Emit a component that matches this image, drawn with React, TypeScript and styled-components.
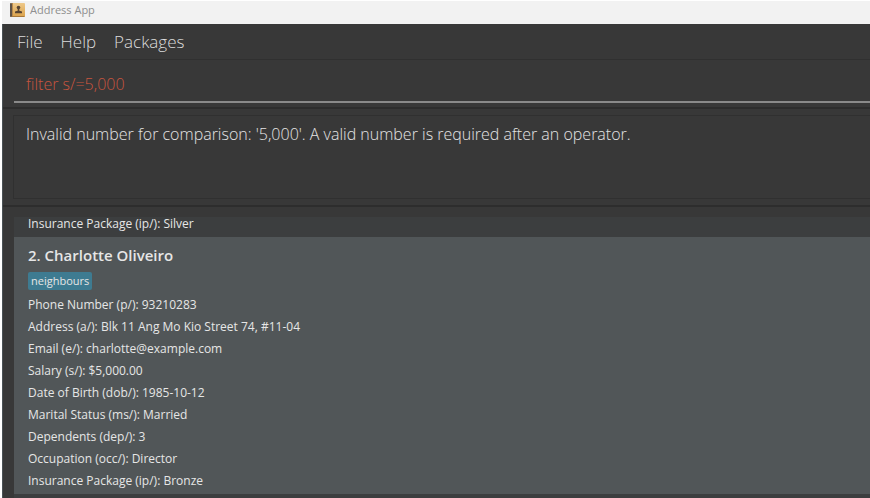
import React, { useState } from "react";
import styled, { createGlobalStyle } from "styled-components";

const Global = createGlobalStyle`
  * { box-sizing: border-box; }
  html, body, #root { height: 100%; }
  body { margin: 0; background: #ffffff; overflow: hidden; }
  button, input { font: inherit; }
`;

const Window = styled.div`
  height: 100%;
  margin-left: 2px;
  padding-top: 1px;
  display: flex;
  flex-direction: column;
  font-family: "Open Sans", "Noto Sans", sans-serif;
`;

const TitleBar = styled.header`
  flex: none;
  height: 23px;
  padding: 0 8px 6px;
  display: flex;
  align-items: center;
  gap: 5px;
  background: #f2f2f2;
  color: #8f8f8f;
  font-size: 11px;
`;

const Content = styled.main`
  flex: 1;
  min-height: 0;
  display: flex;
  flex-direction: column;
  background: #383838;
  border-left: 1px solid #4b5256;
`;

const MenuBar = styled.nav`
  flex: none;
  height: 36px;
  padding: 0 14px 1px;
  display: flex;
  align-items: center;
  gap: 18px;
  border-bottom: 1px solid #303030;
`;

const MenuButton = styled.button`
  padding: 0;
  border: 0;
  background: none;
  color: #dcdcdc;
  font-size: 17px;
  font-weight: 300;
`;

const CommandArea = styled.form`
  flex: none;
  height: 49px;
  padding: 6px 0 5px 11px;
  border-bottom: 2px solid #2d2d2d;
`;

const CommandInput = styled.input`
  width: 100%;
  height: 37px;
  padding: 0 12px;
  border: 0;
  border-bottom: 2px solid #8a8a8a;
  outline: 0;
  background: transparent;
  color: #c8553f;
  font-size: 16px;
  font-weight: 300;
`;

const ResultArea = styled.section`
  flex: none;
  height: 98px;
  padding: 6px 0 6px 10px;
  border-bottom: 2px solid #2d2d2d;
`;

const ResultText = styled.output`
  display: block;
  height: 100%;
  padding: 6px 12px;
  border: 1px solid #303030;
  border-right: 0;
  color: #e4e4e4;
  font-size: 16px;
  font-weight: 300;
  line-height: 24px;
`;

const PersonList = styled.ul`
  flex: 1;
  min-height: 0;
  margin: 10px 0 0 11px;
  padding: 0;
  list-style: none;
  background: #3c3e3f;
  color: #e6e6e6;
`;

const PersonCell = styled.li<{ $selected?: boolean }>`
  padding: ${(p) => (p.$selected ? "7px 14px 2px" : "0 14px")};
  background: ${(p) => (p.$selected ? "#515658" : "#3c3e3f")};
`;

const Name = styled.h2`
  margin: 0 0 6px;
  font-size: 15px;
  font-weight: 600;
  line-height: 22px;
`;

const Tags = styled.div`
  display: flex;
  gap: 7px;
  margin-bottom: 4px;
`;

const Tag = styled.span`
  padding: 0 3px;
  border-radius: 2px;
  background: #3e7b91;
  font-size: 11px;
  line-height: 18px;
`;

const Detail = styled.p<{ $last?: boolean }>`
  margin: 0;
  height: ${(p) => (p.$last ? "20px" : "22px")};
  font-size: 12px;
  line-height: ${(p) => (p.$last ? "14px" : "22px")};
`;

const details = [
  "Phone Number (p/): 93210283",
  "Address (a/): Blk 11 Ang Mo Kio Street 74, #11-04",
  "Email (e/): charlotte@example.com",
  "Salary (s/): $5,000.00",
  "Date of Birth (dob/): 1985-10-12",
  "Marital Status (ms/): Married",
  "Dependents (dep/): 3",
  "Occupation (occ/): Director",
  "Insurance Package (ip/): Bronze",
];

const AddressBookIcon = () => (
  <svg width="15" height="14" viewBox="0 0 15 14" aria-hidden="true">
    <defs>
      <linearGradient id="cover" x1="0" y1="0" x2="0" y2="1">
        <stop offset="0" stopColor="#eec98a" />
        <stop offset="1" stopColor="#dba24a" />
      </linearGradient>
    </defs>
    <rect width="15" height="14" rx="1" fill="url(#cover)" />
    <rect width="2" height="14" rx="1" fill="#5f5348" />
    <path d="M2.500 0v14" stroke="#b98a4c" />
    <path d="M2 13.500h12.500" stroke="#a8783a" />
    <circle cx="8.500" cy="4.600" r="1.800" fill="#574432" />
    <path d="M7.700 6h1.600v1.800l2.700.7v1.800h-7v-1.800l2.700-.7z" fill="#574432" />
  </svg>
);

export default function App() {
  const [command, setCommand] = useState("filter s/=5,000");
  return (
    <>
      <Global />
      <Window>
        <TitleBar>
          <AddressBookIcon />
          <span>Address App</span>
        </TitleBar>
        <Content>
          <MenuBar>
            <MenuButton type="button">File</MenuButton>
            <MenuButton type="button">Help</MenuButton>
            <MenuButton type="button">Packages</MenuButton>
          </MenuBar>
          <CommandArea onSubmit={(e) => e.preventDefault()}>
            <CommandInput
              aria-label="Command"
              spellCheck={false}
              value={command}
              onChange={(e) => setCommand(e.target.value)}
            />
          </CommandArea>
          <ResultArea>
            <ResultText>
              Invalid number for comparison: '5,000'. A valid number is required after an operator.
            </ResultText>
          </ResultArea>
          <PersonList>
            <PersonCell>
              <Detail $last>Insurance Package (ip/): Silver</Detail>
            </PersonCell>
            <PersonCell $selected>
              <Name>2. Charlotte Oliveiro</Name>
              <Tags>
                <Tag>neighbours</Tag>
              </Tags>
              {details.map((text) => (
                <Detail key={text}>{text}</Detail>
              ))}
            </PersonCell>
          </PersonList>
        </Content>
      </Window>
    </>
  );
}
